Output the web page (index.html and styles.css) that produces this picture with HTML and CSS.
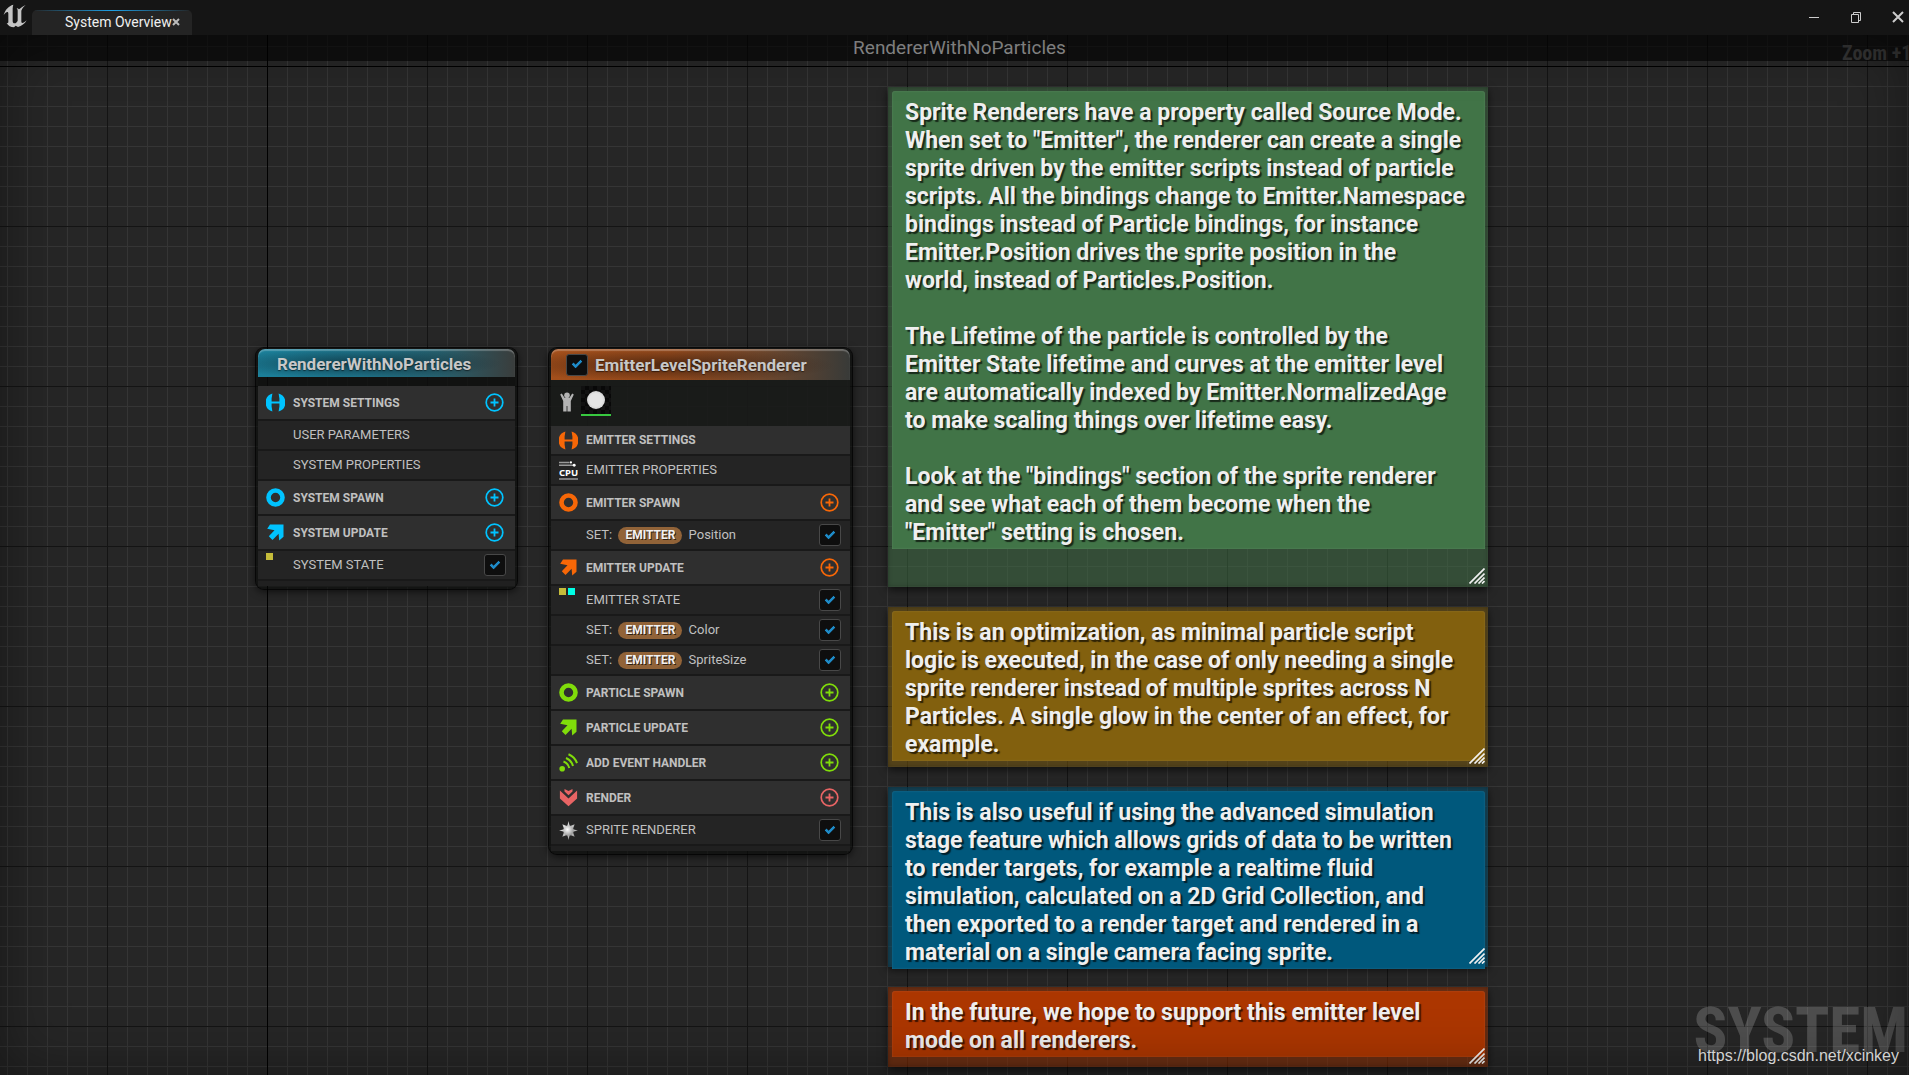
FILE: index.html
```html
<!DOCTYPE html>
<html lang="en">
<head>
<meta charset="utf-8">
<title>System Overview</title>
<link rel="stylesheet" href="styles.css">
</head>
<body>
<svg class="defs" aria-hidden="true">
  <defs>
    <radialGradient id="star-fill" cx=".4" cy=".4" r=".6"><stop offset="0" stop-color="#fff"/><stop offset="1" stop-color="#999"/></radialGradient>
    <symbol id="i-settings" viewBox="0 0 19 19"><path d="M6.400.4A9.500 9.500 0 0 0 6.400 18.600L5.600 13.500V10.600h7.800v2.900l-.8 5.100A9.500 9.500 0 0 0 12.600.4L13.400 5.500v2.900H5.600V5.500z"/></symbol>
    <symbol id="i-spawn" viewBox="0 0 19 19"><circle cx="9.500" cy="9.500" r="7" fill="none" stroke="currentColor" stroke-width="4.600"/></symbol>
    <symbol id="i-update" viewBox="0 0 19 19"><path d="M4 1.500H17.500V13.700L13.200 17.500 12.600 10.800 6.500 17 2.800 13.300 8.500 7.200 1.200 5.800z"/></symbol>
    <symbol id="i-event" viewBox="0 0 19 19"><circle cx="3.200" cy="15.800" r="2.800"/><g fill="none" stroke="currentColor" stroke-width="2"><path d="M4.500 8.500a9 9 0 0 1 5.800 6.500M7 5a12 12 0 0 1 7 8M9.500 1.200a15 15 0 0 1 8.500 9"/></g></symbol>
    <symbol id="i-render" viewBox="0 0 19 19"><path d="M.9 2.500 9.500 10.500 18.100 2.500V10.500L9.500 18.300.9 10.500zM5.500 1 9.500 3 13.500 1V3.600L9.500 7.300 5.500 3.600z"/></symbol>
    <symbol id="i-plus" viewBox="0 0 19 19"><circle cx="9.500" cy="9.500" r="8.300" fill="none" stroke="currentColor" stroke-width="1.700"/><path d="M9.500 5.500v8M5.500 9.500h8" stroke="currentColor" stroke-width="1.800"/></symbol>
    <symbol id="i-grip" viewBox="0 0 16 16"><path d="M.5 15.500 15.500.5M5.500 15.500l10-10M9.500 15.500l6-6M13 15.500l2.500-2.500" stroke="currentColor" stroke-width="1.700"/></symbol>
  </defs>
</svg>

<header class="titlebar">
  <svg class="logo" viewBox="0 0 72 72" aria-label="Unreal"><path d="M31 2C17 6 6 17 2 33C6 27 10 24 13 24C15 24 16 26 16 29V54C16 57 14 58 11 57C15 65 23 70 33 70L38 65L45 69C56 66 65 60 71 49C66 54 61 57 58 57C56 57 55 55 55 52V20C58 13 62 8 68 3C60 7 54 11 48 16C46 14 44 13 41 12C44 16 44 19 44 22V50C42 54 39 58 35 58C31 58 29 55 29 51V14C29 9 30 5 31 2Z"/></svg>
  <div class="tab">
    <span>System Overview</span>
    <button class="tab-close" aria-label="Close tab"><svg viewBox="0 0 8 8"><path d="M1 1l6 6M7 1 1 7"/></svg></button>
  </div>
  <div class="window-controls">
    <button aria-label="Minimize"><svg viewBox="0 0 12 12"><path d="M1 6.500h10"/></svg></button>
    <button aria-label="Restore"><svg viewBox="0 0 12 12"><path d="M1.500 3.500h7v8h-7zM3.500 3.500v-2h7v8h-2"/></svg></button>
    <button aria-label="Close"><svg class="thick" viewBox="0 0 12 12"><path d="M1 1l10 10M11 1 1 11"/></svg></button>
  </div>
</header>

<main class="canvas">
  <h1 class="canvas-title">RendererWithNoParticles</h1>
  <p class="zoom-level">Zoom +1</p>
  <p class="watermark">SYSTEM</p>

  <section class="node node-system">
    <h2 class="node-header">RendererWithNoParticles</h2>
    <div class="node-gap"></div>
    <div class="rows cyan">
      <div class="row group"><svg class="icon"><use href="#i-settings"/></svg><span>SYSTEM SETTINGS</span><button class="add" aria-label="Add system setting"><svg><use href="#i-plus"/></svg></button></div>
      <div class="row"><i class="icon"></i><span>USER PARAMETERS</span></div>
      <div class="row"><i class="icon"></i><span>SYSTEM PROPERTIES</span></div>
      <div class="row group"><svg class="icon"><use href="#i-spawn"/></svg><span>SYSTEM SPAWN</span><button class="add" aria-label="Add to system spawn"><svg><use href="#i-plus"/></svg></button></div>
      <div class="row group"><svg class="icon"><use href="#i-update"/></svg><span>SYSTEM UPDATE</span><button class="add" aria-label="Add to system update"><svg><use href="#i-plus"/></svg></button></div>
      <div class="row"><span class="icon marks"><i class="mark"></i></span><label for="c1">SYSTEM STATE</label><input type="checkbox" id="c1" checked></div>
      <div class="row-end"></div>
    </div>
  </section>

  <section class="node node-emitter">
    <div class="node-header"><input type="checkbox" id="c0" checked><label for="c0">EmitterLevelSpriteRenderer</label></div>
    <div class="preview">
      <svg class="person" viewBox="0 0 14 20"><circle cx="7" cy="3.200" r="2.800"/><path d="M.2 2.500 1.800 1.500 4.500 5.800h5L12.200 1.500l1.600 1L10.800 9V19.500H7.400V14h-.8v5.500H3.200V9z"/></svg>
      <button class="thumb" aria-label="Sprite renderer"><i></i></button>
    </div>
    <div class="rows orange">
      <div class="row group short"><svg class="icon"><use href="#i-settings"/></svg><span>EMITTER SETTINGS</span></div>
      <div class="row"><svg class="icon cpu" viewBox="0 0 20 20"><path d="M0 1.500h11M0 4.500h15M0 19h20" stroke="#999" stroke-width="1.500"/><circle cx="12.500" cy="1.500" r="1.200"/><circle cx="16" cy="4.500" r="1.500"/><text x="10" y="16" text-anchor="middle">CPU</text></svg><span>EMITTER PROPERTIES</span></div>
      <div class="row group"><svg class="icon"><use href="#i-spawn"/></svg><span>EMITTER SPAWN</span><button class="add" aria-label="Add to emitter spawn"><svg><use href="#i-plus"/></svg></button></div>
      <div class="row"><i class="icon"></i><label for="c2">SET: <b class="pill">EMITTER</b> Position</label><input type="checkbox" id="c2" checked></div>
      <div class="row group"><svg class="icon"><use href="#i-update"/></svg><span>EMITTER UPDATE</span><button class="add" aria-label="Add to emitter update"><svg><use href="#i-plus"/></svg></button></div>
      <div class="row"><span class="icon marks"><i class="mark"></i><i class="mark aqua"></i></span><label for="c3">EMITTER STATE</label><input type="checkbox" id="c3" checked></div>
      <div class="row"><i class="icon"></i><label for="c4">SET: <b class="pill">EMITTER</b> Color</label><input type="checkbox" id="c4" checked></div>
      <div class="row"><i class="icon"></i><label for="c5">SET: <b class="pill">EMITTER</b> SpriteSize</label><input type="checkbox" id="c5" checked></div>
      <div class="row group green"><svg class="icon"><use href="#i-spawn"/></svg><span>PARTICLE SPAWN</span><button class="add" aria-label="Add to particle spawn"><svg><use href="#i-plus"/></svg></button></div>
      <div class="row group green"><svg class="icon"><use href="#i-update"/></svg><span>PARTICLE UPDATE</span><button class="add" aria-label="Add to particle update"><svg><use href="#i-plus"/></svg></button></div>
      <div class="row group green"><svg class="icon"><use href="#i-event"/></svg><span>ADD EVENT HANDLER</span><button class="add" aria-label="Add event handler"><svg><use href="#i-plus"/></svg></button></div>
      <div class="row group red"><svg class="icon"><use href="#i-render"/></svg><span>RENDER</span><button class="add" aria-label="Add renderer"><svg><use href="#i-plus"/></svg></button></div>
      <div class="row"><svg class="icon" viewBox="0 0 20 20"><path fill="url(#star-fill)" d="M10 0 11.300 5.500 16.500 3.500 14.500 8.700 20 10 14.500 11.300 16.500 16.500 11.300 14.500 10 20 8.700 14.500 3.500 16.500 5.500 11.300 0 10 5.500 8.700 3.500 3.500 8.700 5.500z"/><circle cx="10" cy="10" r="5.500" fill="url(#star-fill)"/></svg><label for="c6">SPRITE RENDERER</label><input type="checkbox" id="c6" checked></div>
      <div class="row-end"></div>
    </div>
  </section>

  <article class="comment comment-green">
    <p>Sprite Renderers have a property called Source Mode.
When set to "Emitter", the renderer can create a single
sprite driven by the emitter scripts instead of particle
scripts. All the bindings change to Emitter.Namespace
bindings instead of Particle bindings, for instance
Emitter.Position drives the sprite position in the
world, instead of Particles.Position.

The Lifetime of the particle is controlled by the
Emitter State lifetime and curves at the emitter level
are automatically indexed by Emitter.NormalizedAge
to make scaling things over lifetime easy.

Look at the "bindings" section of the sprite renderer
and see what each of them become when the
"Emitter" setting is chosen.</p>
    <svg class="grip"><use href="#i-grip"/></svg>
  </article>
  <article class="comment comment-yellow">
    <p>This is an optimization, as minimal particle script
logic is executed, in the case of only needing a single
sprite renderer instead of multiple sprites across N
Particles. A single glow in the center of an effect, for
example.</p>
    <svg class="grip"><use href="#i-grip"/></svg>
  </article>
  <article class="comment comment-blue">
    <p>This is also useful if using the advanced simulation
stage feature which allows grids of data to be written
to render targets, for example a realtime fluid
simulation, calculated on a 2D Grid Collection, and
then exported to a render target and rendered in a
material on a single camera facing sprite.</p>
    <svg class="grip"><use href="#i-grip"/></svg>
  </article>
  <article class="comment comment-orange">
    <p>In the future, we hope to support this emitter level
mode on all renderers.</p>
    <svg class="grip"><use href="#i-grip"/></svg>
  </article>

  <div class="vignette"></div>
  <a class="source" href="https://blog.csdn.net/xcinkey">https://blog.csdn.net/xcinkey</a>
</main>
</body>
</html>
```
FILE: styles.css
```css
* { box-sizing: border-box; }

body {
  margin: 0;
  height: 100vh;
  display: flex;
  flex-direction: column;
  overflow: hidden;
  background: #151515;
  color: #c0c0c0;
  font: 13px/16px Roboto, "Liberation Sans", sans-serif;
  font-variant-ligatures: none;
}

h1, h2, p { margin: 0; }

button {
  padding: 0;
  border: 0;
  background: none;
  color: inherit;
  display: flex;
  align-items: center;
  justify-content: center;
}

.defs { position: absolute; width: 0; height: 0; }

/* Title bar */
.titlebar {
  flex: none;
  height: 35px;
  display: flex;
  align-items: flex-start;
  padding-left: 3px;
}

.logo { width: 24px; height: 24px; margin-top: 4px; fill: #c4c4c4; }

.tab {
  width: 160px;
  height: 25px;
  margin: 10px 0 0 5px;
  padding: 0 0 2px 33px;
  display: flex;
  align-items: center;
  border-radius: 5px 5px 0 0;
  background: linear-gradient(90deg, transparent, #1ea0e6 50%, transparent) top / 100% 1px no-repeat, #242424;
  color: #f0f0f0;
  font-size: 14px;
  white-space: nowrap;
}

.tab-close svg { width: 8px; height: 8px; stroke: #bbb; stroke-width: 2; }

.window-controls { margin-left: auto; display: flex; align-self: stretch; }
.window-controls button { width: 42px; height: 34px; }
.window-controls button:last-child { width: 22px; margin-left: 10px; }
.window-controls svg { width: 12px; height: 12px; fill: none; stroke: #ccc; stroke-width: 1; }
.window-controls .thick { stroke-width: 2; }

/* Graph canvas: 20px minor grid, 160px major grid, black origin axes */
.canvas {
  position: relative;
  flex: 1;
  overflow: hidden;
  background:
    linear-gradient(#000, #000) 267px 0 / 1px 100% no-repeat,
    linear-gradient(#000, #000) 0 31px / 100% 1px no-repeat,
    linear-gradient(90deg, #141414 1px, transparent 1px) 107px 0 / 160px 100%,
    linear-gradient(#141414 1px, transparent 1px) 0 31px / 100% 160px,
    linear-gradient(90deg, #353535 1px, transparent 1px) 7px 0 / 20px 100%,
    linear-gradient(#353535 1px, transparent 1px) 0 11px / 100% 20px,
    #262626;
}

.canvas-title {
  height: 26px;
  padding-left: 10px;
  background: rgba(0, 0, 0, .6);
  color: #929292;
  font-size: 19px;
  font-weight: 400;
  line-height: 26px;
  text-align: center;
}

.zoom-level, .watermark {
  position: absolute;
  font-family: "Roboto Condensed", Roboto, sans-serif;
  font-weight: 700;
  white-space: nowrap;
}
.zoom-level { top: 6px; left: calc(100% - 67px); color: #343434; font-size: 20px; line-height: 24px; }
.watermark { right: 1px; bottom: 8px; color: rgba(255, 255, 255, .19); font-size: 63px; line-height: 72px; }

.vignette {
  position: absolute;
  inset: 0;
  pointer-events: none;
  box-shadow: inset 0 0 60px rgba(0, 0, 0, .4);
}

.source {
  position: absolute;
  right: 10px;
  bottom: 9px;
  color: #d2d2d2;
  font: 16px/20px "Liberation Sans", Arial, sans-serif;
  text-decoration: none;
}

/* Stack nodes */
.node {
  position: absolute;
  padding: 1px 2px 3px;
  border-radius: 8px;
  background: rgba(6, 8, 6, .6);
  box-shadow: 0 0 0 1px rgba(0, 0, 0, .7), 0 2px 8px rgba(0, 0, 0, .7);
}
.node-system { left: 256px; top: 313px; width: 261px; }
.node-emitter { left: 549px; top: 313px; width: 303px; }

.node-header {
  display: flex;
  align-items: center;
  gap: 7px;
  border-radius: 7px 7px 0 0;
  box-shadow: inset 0 2px 1px rgba(255, 255, 255, .25);
  color: #c8c8c8;
  font-size: 17px;
  font-weight: 700;
  line-height: 20px;
  text-shadow: 0 1px 1px rgba(0, 0, 0, .5);
}
.node-system .node-header {
  height: 28px;
  padding: 2px 0 0 19px;
  background:
    radial-gradient(ellipse 55% 55% at 40% 52%, rgba(10, 30, 38, .65), transparent),
    linear-gradient(90deg, #1b7f99, #1f7890 40%, #26606e 70%, #3a3d3c);
}
.node-emitter .node-header {
  height: 31px;
  padding-left: 15px;
  background:
    radial-gradient(ellipse 55% 55% at 40% 52%, rgba(45, 22, 10, .7), transparent),
    linear-gradient(90deg, #a34f1b, #9c4e1e 40%, #70482d 70%, #383a38);
}

.node-gap { height: 9px; background: rgba(16, 16, 16, .5); }

.preview {
  height: 46px;
  padding: 6px 0 0 9px;
  display: flex;
  align-items: flex-start;
  gap: 7px;
  background: rgba(27, 29, 27, .8);
}
.person { width: 14px; height: 20px; margin-top: 6px; fill: #b4b4b4; }
.thumb {
  width: 30px;
  height: 30px;
  border-bottom: 2px solid #38c940;
  background: repeating-conic-gradient(#080808 0 25%, #111 0 50%) 0 0 / 8px 8px;
}
.thumb i { width: 18px; height: 18px; border-radius: 50%; background: radial-gradient(#e4e4e4 50%, #bbb); }

.rows { display: flex; flex-direction: column; gap: 2px; background: #191919; }
.row {
  height: 28px;
  padding: 0 9px 0 8px;
  display: flex;
  align-items: center;
  gap: 8px;
  background: #242424;
  white-space: nowrap;
}
.group { height: 33px; padding-right: 11px; background: #2f2f2f; font-size: 12px; font-weight: 700; }
.short { height: 28px; }
.row-end { height: 5px; background: #202020; }

.icon { flex: none; width: 19px; height: 19px; fill: currentColor; }
.group .icon, .add { color: var(--accent); }
.cyan { --accent: #00c3ff; }
.orange { --accent: #f76707; }
.green { --accent: #80dc0a; }
.red { --accent: #e86464; }

.cpu { fill: #fff; }
.cpu text { font: 700 10px "Noto Sans", sans-serif; }

.marks { display: flex; gap: 2px; height: 24px; }
.mark { width: 7px; height: 7px; background: #c5bc3a; }
.aqua { background: #00ffe6; }

.add, input { margin: 0 0 0 auto; }
.add svg { width: 19px; height: 19px; fill: currentColor; }

input {
  appearance: none;
  flex: none;
  width: 22px;
  height: 22px;
  display: grid;
  place-items: center;
  border: 1px solid #484848;
  border-radius: 3px;
  background: #0e0e0e;
}
input:checked::before {
  content: "";
  box-sizing: border-box;
  width: 10px;
  height: 6px;
  margin-bottom: 3px;
  border: solid #1e8bc8;
  border-width: 0 0 3px 3px;
  border-radius: 1px;
  transform: rotate(-45deg);
}
.node-header input { margin: 0; }

.pill {
  display: inline-block;
  margin: 0 3px;
  padding: 0 7px;
  border-radius: 9px;
  background: #916338;
  color: #f2f2f2;
  font-size: 12px;
  line-height: 17px;
  text-shadow: 1px 1px 0 rgba(0, 0, 0, .7);
}

/* Comment boxes */
.comment {
  position: absolute;
  left: 888px;
  width: 600px;
  padding: 4px 3px 0 4px;
  background: color-mix(in srgb, var(--tint) 50%, transparent);
  box-shadow: 0 3px 8px rgba(0, 0, 0, .6), inset 0 0 4px rgba(0, 0, 0, .3);
}
.comment p {
  padding: 8px 13px 2px;
  border-radius: 3px 3px 0 0;
  background: var(--tint);
  box-shadow: inset 0 0 2px rgba(255, 255, 255, .15);
  color: #efefef;
  font-size: 23px;
  font-weight: 700;
  line-height: 28px;
  text-shadow: 2px 2px 1px rgba(0, 0, 0, .65);
  white-space: pre;
}
.comment-green { --tint: #417447; top: 52px; height: 500px; }
.comment-yellow { --tint: #82600e; top: 572px; height: 160px; }
.comment-blue { --tint: #00587c; top: 752px; height: 180px; }
.comment-orange { --tint: #ac3600; top: 952px; height: 80px; }

.grip { position: absolute; right: 3px; bottom: 3px; width: 16px; height: 16px; color: #f0f0f0; }
```
